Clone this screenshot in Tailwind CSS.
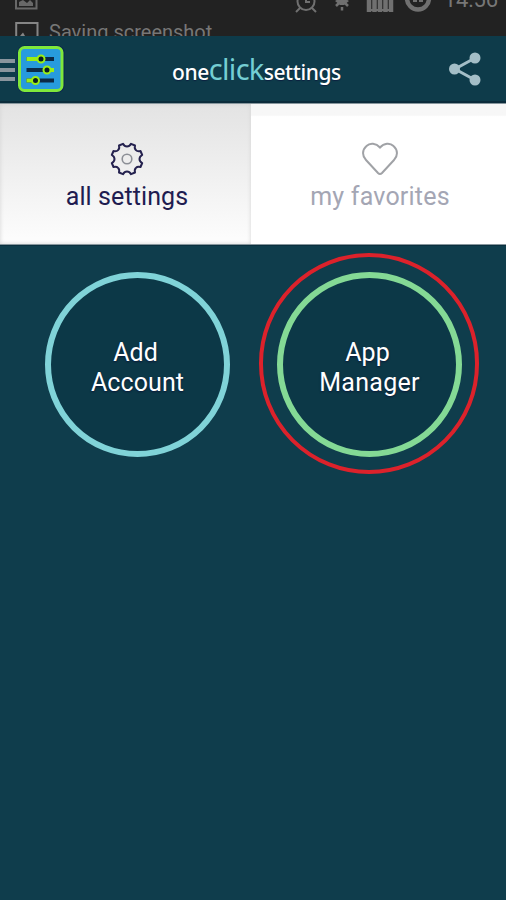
<!DOCTYPE html>
<html lang="en">
<head>
    <meta charset="UTF-8">
    <meta name="viewport" content="width=device-width, initial-scale=1.0">
    <title>One Click Settings</title>
    <script src="https://cdn.jsdelivr.net/npm/@tailwindcss/browser@4"></script>
</head>
<body class="bg-[#0f3d4c] h-[900px] overflow-hidden font-['Roboto',sans-serif]">
    <div class="flex flex-col h-full">
        <!-- status bar, caught while the ticker scrolls -->
        <div class="h-9 shrink-0 bg-[#222222] overflow-hidden flex justify-between text-[#777777]">
            <div class="pl-[15px]">
                <svg class="block" width="24" height="22" viewBox="0 0 24 22" fill="none">
                    <path d="M1 -4V8.500H21.500V-4" stroke="#686868" stroke-width="2"/>
                    <path d="M4 6V2L8 0L12 3L15 0L18 3V6Z" fill="#686868"/>
                </svg>
                <div class="flex gap-[10px]">
                    <svg class="shrink-0" width="24" height="14" viewBox="0 0 24 14" fill="none">
                        <path d="M1.200 14V1H22.500V14" stroke="#868686" stroke-width="2"/>
                        <path d="M5 14L8 10.500L10 14Z" fill="#868686"/>
                    </svg>
                    <span class="-mt-px text-[20px] leading-[23px] whitespace-nowrap">Saving screenshot</span>
                </div>
            </div>
            <div class="flex pr-[8px]">
                <svg class="-ml-[3px] mr-[2px]" width="148" height="14" viewBox="0 0 148 14" fill="none" stroke="#707070" stroke-width="2">
                    <circle cx="12" cy="1.500" r="8.500"/>
                    <path d="M12 -4V2H16M6 8L2 12M18 8L22 12"/>
                    <path d="M41 1Q48 -4 55 1L50 5H46Z" fill="#707070" stroke="none"/>
                    <path d="M42 6L45 3M54 6L51 3M48 7V10.500" stroke-width="2.500"/>
                    <path d="M75 0V12M80.500 0V12M86 0V12M91.500 0V12M97 0V12" stroke-width="4.500"/>
                    <path d="M73 10H99"/>
                    <circle cx="124" cy="-1.500" r="11" stroke-width="4.500"/>
                    <path d="M119 1H123M125 1H129"/>
                </svg>
                <span class="-mt-[13px] text-[22px] leading-[25px] tracking-[-0.100px]">14:56</span>
            </div>
        </div>

        <!-- action bar -->
        <header class="h-[67px] shrink-0 bg-[#0e3b4a] border-b-2 border-[#0b2c3b] flex items-center justify-between pr-[24px]">
            <div class="flex items-center w-[172px]">
                <div class="flex flex-col gap-[5px] w-[15px] pt-[3px]">
                    <div class="h-[4px] bg-[#89959d]"></div>
                    <div class="h-[4px] bg-[#89959d]"></div>
                    <div class="h-[4px] bg-[#89959d]"></div>
                </div>
                <svg class="ml-[2px]" width="48" height="48" viewBox="0 0 48 48" fill="none">
                    <rect x="0.500" y="0.500" width="47" height="47" rx="7" fill="#0b2450"/>
                    <rect x="2.500" y="2.500" width="42.500" height="43" rx="5" fill="#279bdd" stroke="#7fe83b" stroke-width="3"/>
                    <path d="M9.500 14H37M9.500 25H37M9.500 35.500H37" stroke="#0c2a46" stroke-width="4"/>
                    <path d="M9.500 14H24M31 25H37M9.500 35.500H19" stroke="#9aee16" stroke-width="4"/>
                    <g fill="#0a1c25" stroke="#9aee16" stroke-width="2">
                        <circle cx="24" cy="14" r="3.500"/>
                        <circle cx="30" cy="25" r="3.500"/>
                        <circle cx="18.500" cy="35.500" r="3.500"/>
                    </g>
                </svg>
            </div>
            <h1 class="flex items-baseline w-[170px] whitespace-nowrap font-['Noto_Sans',sans-serif] font-medium text-white text-[21px] leading-none tracking-[-0.400px]">
                <span class="[text-shadow:0_1px_1px_#0b2040]">one</span><span class="text-[29px] font-normal text-[#74ced3] tracking-[-0.700px]">click</span><span class="[text-shadow:0_1px_1px_#0b2040]">settings</span>
            </h1>
            <svg class="ml-auto" width="34" height="36" viewBox="0 0 34 36">
                <path d="M27 7L7 18L27 29" fill="none" stroke="#a4bec7" stroke-width="3"/>
                <g fill="#a4bec7">
                    <circle cx="27" cy="7" r="5.500"/>
                    <circle cx="6.500" cy="18" r="5.500"/>
                    <circle cx="27" cy="29" r="5.500"/>
                </g>
            </svg>
        </header>

        <nav class="h-[142px] shrink-0 grid grid-cols-[251px_1fr] bg-white border-y border-[#87969d] text-[25px] leading-[30px]">
            <button class="flex flex-col items-center pt-[38px] pl-[3px] bg-linear-to-b from-[#e3e3e3] to-[#fdfdfd] text-[#201c50] shadow-[inset_0_0_4px_#d4d4d4]">
                <svg width="34" height="34" viewBox="-17 -17 34 34" fill="none">
                    <path d="M-8 -13.500L-4 -15.200Q-2.500 -12.500 0 -12.500Q2.500 -12.500 4 -15.200L8 -13.500Q7.200 -10.500 8.900 -8.900Q10.500 -7.200 13.500 -8L15.200 -4Q12.500 -2.500 12.500 0Q12.500 2.500 15.200 4L13.500 8Q10.500 7.200 8.900 8.900Q7.200 10.500 8 13.500L4 15.200Q2.500 12.500 0 12.500Q-2.500 12.500 -4 15.200L-8 13.500Q-7.200 10.500 -8.900 8.900Q-10.500 7.200 -13.500 8L-15.200 4Q-12.500 2.500 -12.500 0Q-12.500 -2.500 -15.200 -4L-13.500 -8Q-10.500 -7.200 -8.900 -8.900Q-7.200 -10.500 -8 -13.500Z" stroke="#25224f" stroke-width="2" stroke-linejoin="round"/>
                    <circle r="4.800" stroke="#8c8f96" stroke-width="1.600"/>
                </svg>
                <span class="mt-[6px] tracking-[0.100px]">all settings</span>
            </button>
            <button class="flex flex-col items-center pt-[38px] pl-[3px] bg-linear-to-b from-[#f7f7f7] from-8% to-white to-9% text-[#a4a6b4]">
                <svg width="38" height="34" viewBox="0 0 38 34" fill="none">
                    <path d="M19 5.500C15 1 9 0.500 5.500 4C1 8 1 14 5 18L17 31Q19 33 21 31L33 18C37 14 37 8 32.500 4C29 0.500 23 1 19 5.500Z" stroke="#a0a2a6" stroke-width="2"/>
                </svg>
                <span class="mt-[6px] tracking-[0.200px]">my favorites</span>
            </button>
        </nav>

        <main class="flex-1 border-t border-[#0a2f3e] flex items-start pl-[45px] pt-[26px] gap-[47px] text-white text-[25px] leading-[30px] text-center">
            <button class="size-[185px] shrink-0 rounded-full border-[6px] border-[#80d3d8] bg-[#0c3847] flex flex-col items-center justify-center pt-[6px] [text-shadow:0_1px_2px_#0a1838]">
                <span class="pr-[4px]">Add</span>
                <span class="tracking-[0.100px]">Account</span>
            </button>
            <button class="relative size-[185px] shrink-0 rounded-full border-[6px] border-[#84d995] bg-[#0c3847] flex flex-col items-center justify-center pt-[6px] [text-shadow:0_1px_2px_#0a1838]">
                <span class="pr-[4px]">App</span>
                <span class="tracking-[0.300px]">Manager</span>
                <!-- highlight ring -->
                <span class="absolute -left-[24px] -top-[25px] w-[220px] h-[221px] rounded-full border-4 border-[#dc222b]"></span>
            </button>
        </main>
    </div>
</body>
</html>
